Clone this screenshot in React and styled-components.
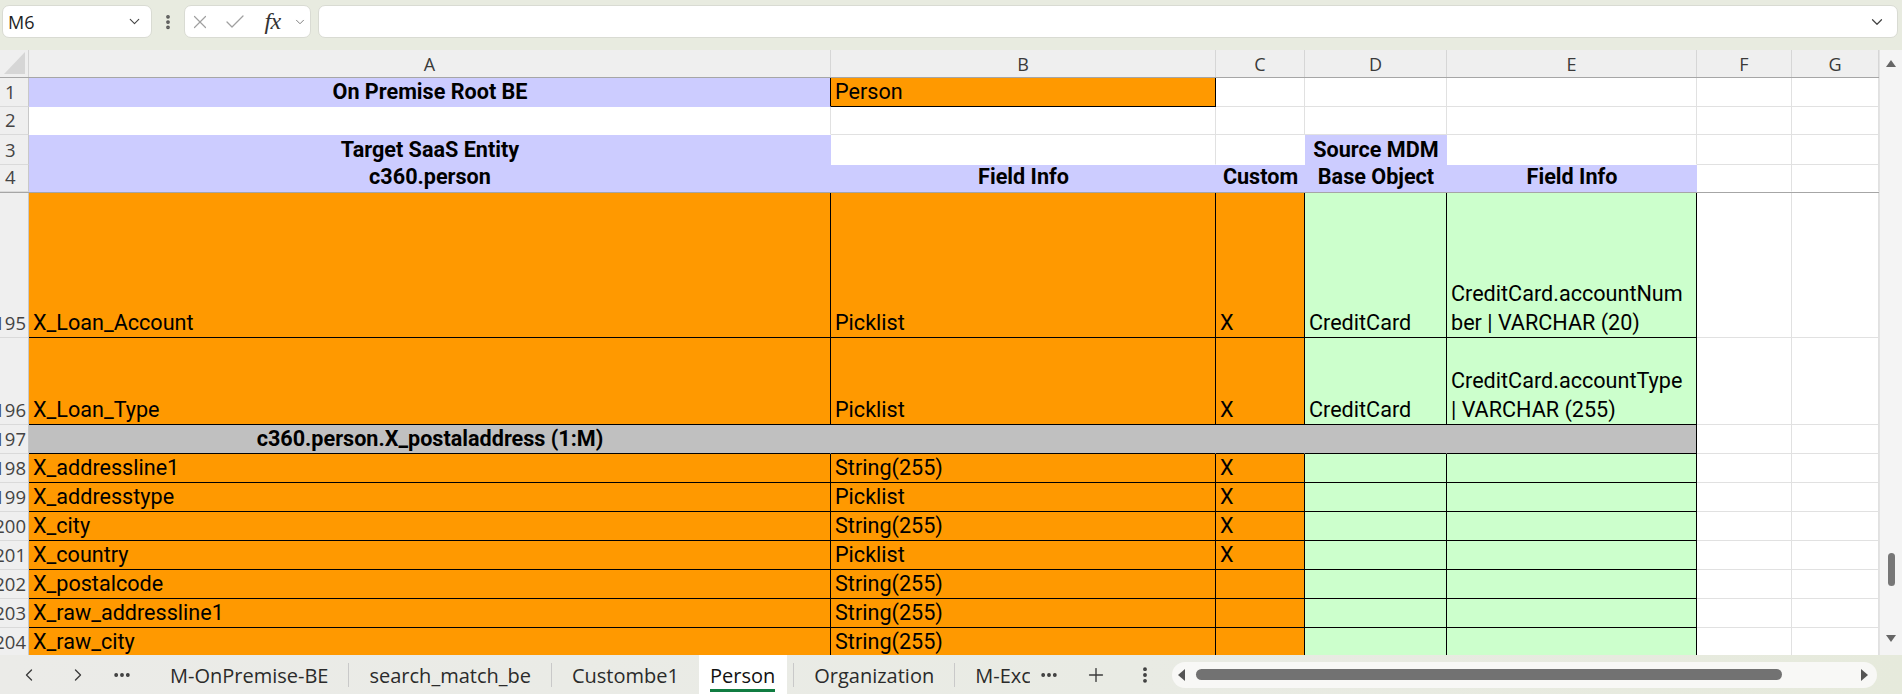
import React from "react";
import styled, { createGlobalStyle } from "styled-components";
import {
  ChevronDown,
  ChevronLeft,
  ChevronRight,
  X,
  Check,
  Ellipsis,
  EllipsisVertical,
  Plus,
} from "lucide-react";

const LAV = "#ccccff";
const ORG = "#ff9900";
const GRN = "#ccffcc";
const GRY = "#c0c0c0";
const GRID = "#e1e1e1";
const BLK = "#000";
const WHITE = "#fff";

// row header + columns A..G
const COLS = "29px 802px 385px 89px 142px 250px 95px 87px";

const GlobalStyle = createGlobalStyle`
	html, body {
		margin: 0;
		padding: 0;
	}
	body {
		background: #e8ebe0;
		font-family: "Open Sans", sans-serif;
		overflow: hidden;
	}
	*, *::before, *::after {
		box-sizing: border-box;
	}
`;

const Page = styled.div`
	width: 1902px;
	height: 694px;
	display: flex;
	flex-direction: column;
	overflow: hidden;
	background: #e8ebe0;
`;

/* ---------- formula bar ---------- */

const Toolbar = styled.div`
	flex: none;
	height: 50px;
	display: flex;
	align-items: flex-start;
	padding: 5px 4px 0 2px;
`;

const Box = styled.div`
	height: 33px;
	background: #fff;
	border: 1px solid #d9dbd3;
	border-radius: 7px;
	display: flex;
	align-items: center;
`;

const NameBox = styled(Box)`
	width: 150px;
	justify-content: space-between;
	padding: 0 8px 0 5px;
	font-size: 18px;
	color: #1f1f1f;
`;

const Kebab = styled.div`
	width: 32px;
	height: 33px;
	display: flex;
	align-items: center;
	justify-content: center;
	color: #555;
`;

const FxBox = styled(Box)`
	width: 127px;
`;

const Slot = styled.div`
	width: ${(p) => p.$w}px;
	height: 100%;
	display: flex;
	align-items: center;
	justify-content: center;
	color: ${(p) => p.$color || "#a0a0a0"};
`;

const Fx = styled.span`
	font: italic 24px "Liberation Serif", serif;
	color: #333;
	letter-spacing: -0.5px;
`;

const FormulaInput = styled(Box)`
	flex: 1;
	margin-left: 7px;
	justify-content: flex-end;
	padding-right: 11px;
	color: #444;
`;

/* ---------- sheet ---------- */

const Sheet = styled.div`
	flex: none;
	height: 605px;
	display: flex;
	background: #fff;
`;

const Grid = styled.div`
	width: 1879px;
	flex: none;
	overflow: hidden;
	display: flex;
	flex-direction: column;
`;

const HeaderRow = styled.div`
	flex: none;
	height: 28px;
	display: grid;
	grid-template-columns: ${COLS};
	background: #efefef;
	border-bottom: 1px solid #a6a6a6;
`;

const Corner = styled.div`
	border-right: 1px solid #d4d4d4;
	display: flex;
	align-items: flex-start;
	justify-content: flex-end;
	padding: 2px 3px 0 0;
`;

const ColHead = styled.div`
	display: flex;
	align-items: center;
	justify-content: center;
	border-right: 1px solid #d6d6d6;
	font-size: 18px;
	color: #3a3a3a;
`;

const Row = styled.div`
	flex: none;
	height: ${(p) => p.$h}px;
	display: grid;
	grid-template-columns: ${COLS};
	${(p) => p.$freeze && "border-bottom: 1px solid #a6a6a6;"}
`;

const RowHead = styled.div`
	background: #efefef;
	border-right: 1px solid #c8c8c8;
	border-bottom: 1px solid #dadada;
	display: flex;
	align-items: flex-end;
	justify-content: ${(p) => (p.$long ? "flex-end" : "flex-start")};
	padding: ${(p) => (p.$long ? "0 2px 0 0" : "0 0 0 5px")};
	font-size: 18.5px;
	line-height: 28px;
	color: #444;
	overflow: hidden;
	white-space: nowrap;
`;

const Cell = styled.div`
	background: ${(p) => p.$fill || WHITE};
	border-right: 1px solid ${(p) => p.$r};
	border-bottom: 1px solid ${(p) => p.$b};
	display: flex;
	flex-direction: column;
	justify-content: flex-end;
	align-items: ${(p) => (p.$center ? "center" : "flex-start")};
	padding: 0 3px 0 4px;
	font-family: Roboto, "Liberation Sans", sans-serif;
	font-size: 21.6px;
	font-weight: ${(p) => (p.$bold ? 700 : 400)};
	line-height: 29px;
	color: #000;
	white-space: nowrap;
	overflow: hidden;
`;

const VScroll = styled.div`
	width: 23px;
	flex: none;
	background: #f4f4f4;
	border-left: 1px solid #e3e3e3;
	display: flex;
	flex-direction: column;
	align-items: center;
	padding-top: 10px;
`;

const VThumb = styled.div`
	width: 7px;
	height: 33px;
	border-radius: 4px;
	background: #777;
	margin: ${(p) => p.$top}px 0 49px;
`;

const Tri = styled.div`
	width: 0;
	height: 0;
	flex: none;
	${(p) =>
    p.$dir === "up"
      ? `border-left: 5px solid transparent; border-right: 5px solid transparent; border-bottom: 7px solid ${p.$c};`
      : p.$dir === "down"
        ? `border-left: 5px solid transparent; border-right: 5px solid transparent; border-top: 7px solid ${p.$c};`
        : p.$dir === "left"
          ? `border-top: 6px solid transparent; border-bottom: 6px solid transparent; border-right: 7px solid ${p.$c};`
          : `border-top: 6px solid transparent; border-bottom: 6px solid transparent; border-left: 7px solid ${p.$c};`}
`;

/* ---------- sheet tabs ---------- */

const TabBar = styled.div`
	flex: none;
	height: 39px;
	display: flex;
	align-items: stretch;
	padding-left: 7px;
	background: linear-gradient(90deg, #ebebe8 0%, #e9ebe4 60%, #e6eadc 100%);
`;

const NavBtn = styled.div`
	flex: none;
	width: ${(p) => p.$w}px;
	margin-right: ${(p) => p.$gap || 0}px;
	display: flex;
	align-items: center;
	justify-content: center;
	color: #3b3b3b;
`;

const Tabs = styled.div`
	flex: none;
	width: 880px;
	margin-left: 11px;
	display: flex;
	align-items: stretch;
	overflow: hidden;
`;

const Tab = styled.div`
	flex: none;
	display: flex;
	align-items: center;
	padding: ${(p) => (p.$active ? "0 12px 0 11px" : "0 20px")};
	margin-right: ${(p) => (p.$active ? 6 : 0)}px;
	background: ${(p) => (p.$active ? "#fff" : "transparent")};
	font-size: 20px;
	color: ${(p) => (p.$active ? "#111" : "#2b2b2b")};
	white-space: nowrap;
`;

const TabLabel = styled.span`
	display: block;
	line-height: 26px;
	margin-top: 5px;
	border-bottom: 3px solid ${(p) => (p.$active ? "#107c41" : "transparent")};
`;

const Sep = styled.div`
	flex: none;
	width: 1px;
	height: 24px;
	align-self: center;
	background: #c9c9c9;
`;

const HScroll = styled.div`
	flex: none;
	width: 705px;
	height: 26px;
	align-self: center;
	margin-left: 12px;
	border-radius: 13px;
	background: #f8f8f6;
	display: flex;
	align-items: center;
	padding: 0 9px 0 6px;
`;

const HThumb = styled.div`
	flex: none;
	width: 586px;
	height: 11px;
	margin-left: 11px;
	border-radius: 6px;
	background: #727272;
`;

const Spacer = styled.div`
	flex: 1;
`;

/* ---------- data ---------- */

const W = { r: GRID, b: GRID };
const head = (t, extra = {}) => ({ t, fill: LAV, bold: true, center: true, r: LAV, b: LAV, ...extra });
const org = (t) => ({ t, fill: ORG, r: BLK, b: BLK });
const grn = (t, lines) => ({ t, lines, fill: GRN, r: BLK, b: BLK });
const gry = (t, extra = {}) => ({ t, fill: GRY, r: GRY, b: BLK, ...extra });

const dataRow = (n, a, b, c) => ({
  n,
  h: 29,
  cells: [org(a), org(b), org(c), grn(""), grn(""), W, W],
});

const rows = [
  {
    n: "1",
    h: 29,
    cells: [head("On Premise Root BE", { r: BLK }), { t: "Person", fill: ORG, r: BLK, b: BLK }, W, W, W, W, W],
  },
  {
    n: "2",
    h: 28,
    cells: [{ r: GRID, b: WHITE }, W, W, W, W, W, W],
  },
  {
    n: "3",
    h: 30,
    cells: [
      head("Target SaaS Entity"),
      { r: GRID, b: WHITE },
      { r: WHITE, b: WHITE },
      head("Source MDM"),
      { r: GRID, b: WHITE },
      W,
      W,
    ],
  },
  {
    n: "4",
    h: 28,
    freeze: true,
    cells: [
      head("c360.person"),
      head("Field Info"),
      head("Custom"),
      head("Base Object"),
      head("Field Info"),
      { r: GRID, b: WHITE },
      { r: GRID, b: WHITE },
    ],
  },
  {
    n: "195",
    h: 145,
    cells: [
      org("X_Loan_Account"),
      org("Picklist"),
      org("X"),
      grn("CreditCard"),
      grn(null, ["CreditCard.accountNum", "ber | VARCHAR (20)"]),
      W,
      W,
    ],
  },
  {
    n: "196",
    h: 87,
    cells: [
      org("X_Loan_Type"),
      org("Picklist"),
      org("X"),
      grn("CreditCard"),
      grn(null, ["CreditCard.accountType", "| VARCHAR (255)"]),
      W,
      W,
    ],
  },
  {
    n: "197",
    h: 29,
    cells: [
      gry("c360.person.X_postaladdress (1:M)", { bold: true, center: true }),
      gry(""),
      gry(""),
      gry(""),
      gry("", { r: BLK }),
      W,
      W,
    ],
  },
  dataRow("198", "X_addressline1", "String(255)", "X"),
  dataRow("199", "X_addresstype", "Picklist", "X"),
  dataRow("200", "X_city", "String(255)", "X"),
  dataRow("201", "X_country", "Picklist", "X"),
  dataRow("202", "X_postalcode", "String(255)", ""),
  dataRow("203", "X_raw_addressline1", "String(255)", ""),
  dataRow("204", "X_raw_city", "String(255)", ""),
];

const sheets = ["M-OnPremise-BE", "search_match_be", "Custombe1", "Person", "Organization", "M-ExceptionBE"];
const ACTIVE = "Person";

function TabStrip() {
  const out = [];
  sheets.forEach((name, i) => {
    const active = name === ACTIVE;
    const prevActive = sheets[i - 1] === ACTIVE;
    // no divider right before the active tab
    if (i > 0 && !active) out.push(<Sep key={"s" + i} />);
    out.push(
      <Tab key={name} $active={active}>
        <TabLabel $active={active}>{name}</TabLabel>
      </Tab>
    );
    void prevActive;
  });
  return <Tabs>{out}</Tabs>;
}

export default function App() {
  return (
    <>
      <GlobalStyle />
      <Page>
        <Toolbar>
          <NameBox>
            <span>M6</span>
            <ChevronDown size={17} strokeWidth={1.6} color="#444" />
          </NameBox>
          <Kebab>
            <EllipsisVertical size={18} strokeWidth={3} />
          </Kebab>
          <FxBox>
            <Slot $w={30}>
              <X size={22} strokeWidth={1.3} />
            </Slot>
            <Slot $w={42}>
              <Check size={24} strokeWidth={1.3} />
            </Slot>
            <Slot $w={34} $color="#333">
              <Fx>fx</Fx>
            </Slot>
            <Slot $w={21} $color="#777">
              <ChevronDown size={14} strokeWidth={1.6} />
            </Slot>
          </FxBox>
          <FormulaInput>
            <ChevronDown size={18} strokeWidth={1.6} />
          </FormulaInput>
        </Toolbar>

        <Sheet>
          <Grid>
            <HeaderRow>
              <Corner>
                <svg width="21" height="22" viewBox="0 0 21 22">
                  <polygon points="21,0 21,22 0,22" fill="#d6d6d6" />
                </svg>
              </Corner>
              {["A", "B", "C", "D", "E", "F", "G"].map((c) => (
                <ColHead key={c}>{c}</ColHead>
              ))}
            </HeaderRow>
            {rows.map((row) => (
              <Row key={row.n} $h={row.h} $freeze={row.freeze}>
                <RowHead $long={row.n.length > 2}>{row.n}</RowHead>
                {row.cells.map((c, i) => (
                  <Cell
                    key={i}
                    $fill={c.fill}
                    $bold={c.bold}
                    $center={c.center}
                    $r={c.r}
                    $b={c.b}
                  >
                    {c.lines ? c.lines.map((l) => <span key={l}>{l}</span>) : c.t}
                  </Cell>
                ))}
              </Row>
            ))}
          </Grid>
          <VScroll>
            <Tri $dir="up" $c="#666" />
            <VThumb $top={486} />
            <Tri $dir="down" $c="#666" />
          </VScroll>
        </Sheet>

        <TabBar>
          <NavBtn $w={44} $gap={5}>
            <ChevronLeft size={20} strokeWidth={1.6} />
          </NavBtn>
          <NavBtn $w={44} $gap={5}>
            <ChevronRight size={20} strokeWidth={1.6} />
          </NavBtn>
          <NavBtn $w={34}>
            <Ellipsis size={20} strokeWidth={2.6} />
          </NavBtn>
          <TabStrip />
          <NavBtn $w={38} $gap={9}>
            <Ellipsis size={20} strokeWidth={2.6} />
          </NavBtn>
          <NavBtn $w={38} $gap={15}>
            <Plus size={22} strokeWidth={1.5} />
          </NavBtn>
          <NavBtn $w={30}>
            <EllipsisVertical size={20} strokeWidth={2.6} />
          </NavBtn>
          <HScroll>
            <Tri $dir="left" $c="#555" />
            <HThumb />
            <Spacer />
            <Tri $dir="right" $c="#555" />
          </HScroll>
        </TabBar>
      </Page>
    </>
  );
}
